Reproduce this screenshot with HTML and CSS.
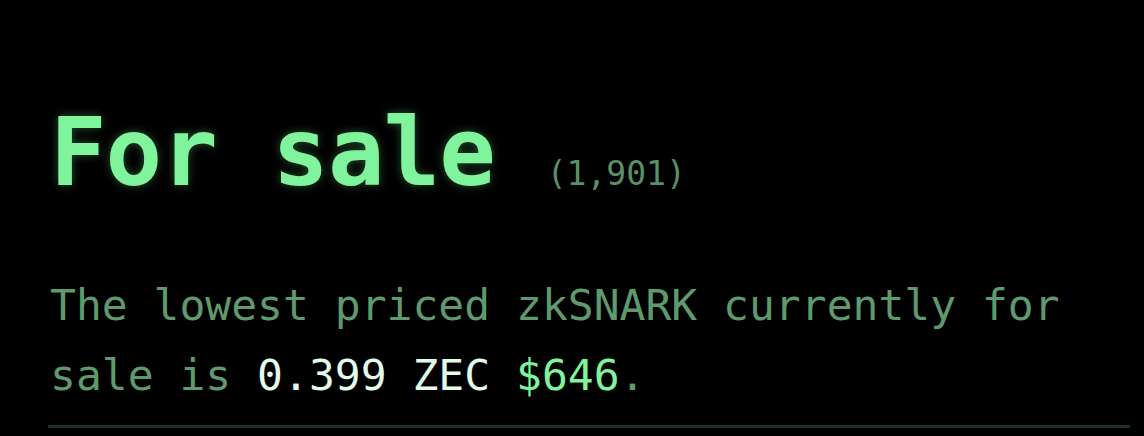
FILE: index.html
```html
<!DOCTYPE html>
<html lang="en">
<head>
<meta charset="utf-8">
<title>For sale</title>
<link rel="stylesheet" href="styles.css">
</head>
<body>
<section class="panel">
  <div class="heading">
    <h1 class="title">For sale</h1>
    <span class="count">(1,901)</span>
  </div>
  <p class="summary">The lowest priced zkSNARK currently for sale is <span class="zec">0.399 ZEC</span> <span class="usd">$646</span>.</p>
  <hr class="rule">
</section>
</body>
</html>
```

FILE: styles.css
```css
html, body {
  margin: 0;
  padding: 0;
  background: #000;
}
body {
  font-family: "DejaVu Sans Mono", "Liberation Mono", monospace;
  width: 1144px;
  height: 436px;
  overflow: hidden;
}
.panel {
  padding: 106px 14px 0 50px;
}
.heading {
  display: flex;
  align-items: baseline;
  gap: 52px;
}
.title {
  margin: 0;
  font-size: 94px;
  line-height: 94px;
  font-weight: bold;
  letter-spacing: -1px;
  color: #80f49c;
  text-shadow: 0 0 10px rgba(110, 240, 140, 0.35);
}
.count {
  font-size: 33px;
  color: #5a9068;
}
.summary {
  margin: 70px 0 0;
  font-size: 43px;
  line-height: 70px;
  color: #5e9a6d;
}
.zec {
  color: #e2fbea;
}
.usd {
  color: #80f49c;
}
.rule {
  margin: 15px 0 0 -2px;
  height: 3px;
  border: 0;
  background: #1e3126;
}
```
